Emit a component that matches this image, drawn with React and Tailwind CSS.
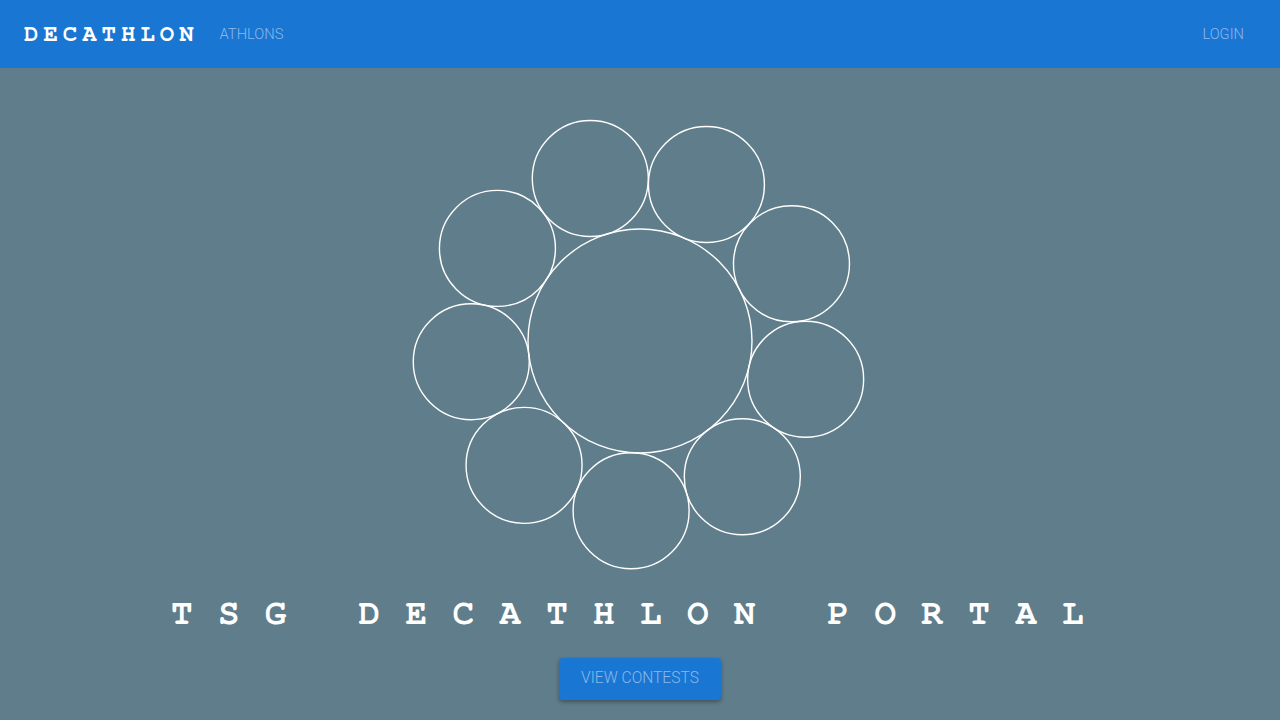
const CX = 230;
const CY = 230;
const RING = 170;
const angles = [13, 53, 93, 133, 173, 213, 253, 293, 333];

function Rings() {
  return (
    <svg width="460" height="460" viewBox="0 0 460 460" fill="none">
      <circle cx={CX} cy={CY} r="112" stroke="#ffffff" strokeWidth="1.4" />
      {angles.map((a) => {
        const rad = (a * Math.PI) / 180;
        return (
          <circle
            key={a}
            cx={CX + RING * Math.cos(rad)}
            cy={CY + RING * Math.sin(rad)}
            r="58"
            stroke="#ffffff"
            strokeWidth="1.4"
          />
        );
      })}
    </svg>
  );
}

export default function App() {
  return (
    <div className="min-h-screen bg-[#607d8b] flex flex-col font-['Roboto',sans-serif]">
      <header className="h-[68px] bg-[#1976d2] flex items-center pl-6 pr-9">
        <span className="font-['Nimbus_Mono_PS','FreeMono','Courier_New',Courier,monospace] font-bold text-[24px] tracking-[5px] text-white">
          DECATHLON
        </span>
        <a className="ml-[21px] text-[14.7px] font-light text-[#8cb9ec]">ATHLONS</a>
        <a className="ml-auto text-[14.7px] font-light text-[#8cb9ec]">LOGIN</a>
      </header>

      <main className="flex flex-col items-center pt-[43px]">
        <Rings />
        <h1 className="mt-[22px] font-['Nimbus_Mono_PS','FreeMono','Courier_New',Courier,monospace] font-bold text-[36px] leading-[40px] tracking-[25.3px] text-white whitespace-pre">
          TSG DECATHLON PORTAL
        </h1>
        <button className="mt-[25px] h-[42px] w-[162px] rounded bg-[#1976d2] text-[15.6px] font-light text-[#8cb9ec] shadow-[0_2px_4px_rgba(0,0,0,0.35)]">
          VIEW CONTESTS
        </button>
      </main>
    </div>
  );
}
